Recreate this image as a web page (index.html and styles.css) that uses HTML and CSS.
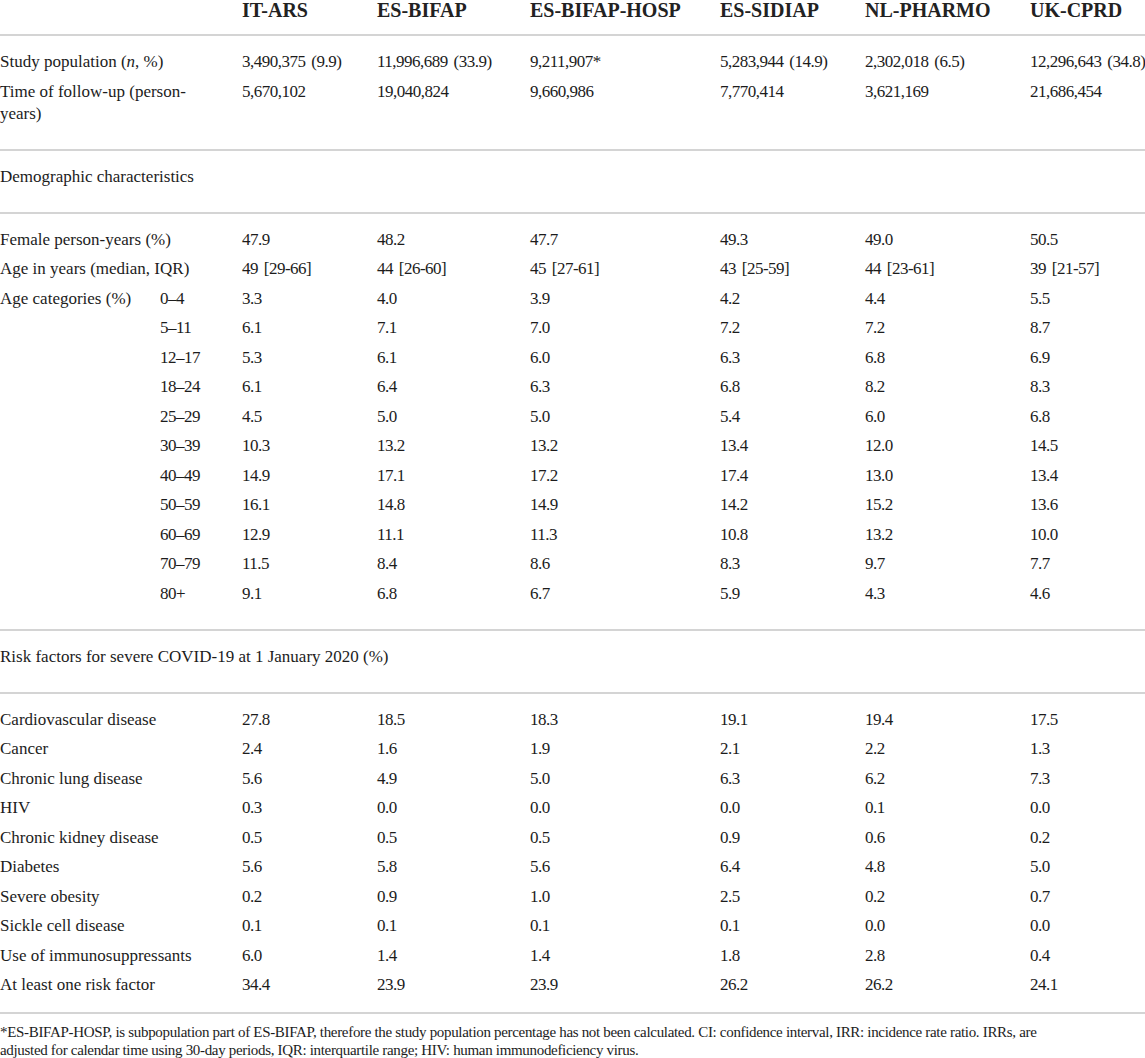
FILE: index.html
```html
<!DOCTYPE html>
<html lang="en">
<head>
<meta charset="utf-8">
<title>Study population characteristics</title>
<link rel="stylesheet" href="styles.css">
</head>
<body>
<table class="data">
  <colgroup>
    <col class="c-label"><col class="c-sub"><col class="c-1"><col class="c-2"><col class="c-3"><col class="c-4"><col class="c-5"><col class="c-6">
  </colgroup>
  <thead>
    <tr>
      <th colspan="2"></th>
      <th>IT-ARS</th>
      <th>ES-BIFAP</th>
      <th>ES-BIFAP-HOSP</th>
      <th>ES-SIDIAP</th>
      <th>NL-PHARMO</th>
      <th>UK-CPRD</th>
    </tr>
  </thead>
  <tbody>
    <tr class="first">
      <td colspan="2" class="label">Study population (<i>n</i>, %)</td>
      <td>3,490,375 (9.9)</td><td>11,996,689 (33.9)</td><td>9,211,907*</td><td>5,283,944 (14.9)</td><td>2,302,018 (6.5)</td><td>12,296,643 (34.8)</td>
    </tr>
    <tr class="last">
      <td colspan="2" class="label">Time of follow-up (person-years)</td>
      <td>5,670,102</td><td>19,040,824</td><td>9,660,986</td><td>7,770,414</td><td>3,621,169</td><td>21,686,454</td>
    </tr>
  </tbody>
  <tbody>
    <tr class="first last">
      <td colspan="8" class="label">Demographic characteristics</td>
    </tr>
  </tbody>
  <tbody>
    <tr class="first">
      <td colspan="2" class="label">Female person-years (%)</td>
      <td>47.9</td><td>48.2</td><td>47.7</td><td>49.3</td><td>49.0</td><td>50.5</td>
    </tr>
    <tr>
      <td colspan="2" class="label">Age in years (median, IQR)</td>
      <td>49 [29-66]</td><td>44 [26-60]</td><td>45 [27-61]</td><td>43 [25-59]</td><td>44 [23-61]</td><td>39 [21-57]</td>
    </tr>
    <tr>
      <td class="label">Age categories (%)</td><td>0–4</td>
      <td>3.3</td><td>4.0</td><td>3.9</td><td>4.2</td><td>4.4</td><td>5.5</td>
    </tr>
    <tr><td></td><td>5–11</td><td>6.1</td><td>7.1</td><td>7.0</td><td>7.2</td><td>7.2</td><td>8.7</td></tr>
    <tr><td></td><td>12–17</td><td>5.3</td><td>6.1</td><td>6.0</td><td>6.3</td><td>6.8</td><td>6.9</td></tr>
    <tr><td></td><td>18–24</td><td>6.1</td><td>6.4</td><td>6.3</td><td>6.8</td><td>8.2</td><td>8.3</td></tr>
    <tr><td></td><td>25–29</td><td>4.5</td><td>5.0</td><td>5.0</td><td>5.4</td><td>6.0</td><td>6.8</td></tr>
    <tr><td></td><td>30–39</td><td>10.3</td><td>13.2</td><td>13.2</td><td>13.4</td><td>12.0</td><td>14.5</td></tr>
    <tr><td></td><td>40–49</td><td>14.9</td><td>17.1</td><td>17.2</td><td>17.4</td><td>13.0</td><td>13.4</td></tr>
    <tr><td></td><td>50–59</td><td>16.1</td><td>14.8</td><td>14.9</td><td>14.2</td><td>15.2</td><td>13.6</td></tr>
    <tr><td></td><td>60–69</td><td>12.9</td><td>11.1</td><td>11.3</td><td>10.8</td><td>13.2</td><td>10.0</td></tr>
    <tr><td></td><td>70–79</td><td>11.5</td><td>8.4</td><td>8.6</td><td>8.3</td><td>9.7</td><td>7.7</td></tr>
    <tr class="last"><td></td><td>80+</td><td>9.1</td><td>6.8</td><td>6.7</td><td>5.9</td><td>4.3</td><td>4.6</td></tr>
  </tbody>
  <tbody>
    <tr class="first last">
      <td colspan="8" class="label">Risk factors for severe COVID-19 at 1 January 2020 (%)</td>
    </tr>
  </tbody>
  <tbody class="final">
    <tr class="first"><td colspan="2" class="label">Cardiovascular disease</td><td>27.8</td><td>18.5</td><td>18.3</td><td>19.1</td><td>19.4</td><td>17.5</td></tr>
    <tr><td colspan="2" class="label">Cancer</td><td>2.4</td><td>1.6</td><td>1.9</td><td>2.1</td><td>2.2</td><td>1.3</td></tr>
    <tr><td colspan="2" class="label">Chronic lung disease</td><td>5.6</td><td>4.9</td><td>5.0</td><td>6.3</td><td>6.2</td><td>7.3</td></tr>
    <tr><td colspan="2" class="label">HIV</td><td>0.3</td><td>0.0</td><td>0.0</td><td>0.0</td><td>0.1</td><td>0.0</td></tr>
    <tr><td colspan="2" class="label">Chronic kidney disease</td><td>0.5</td><td>0.5</td><td>0.5</td><td>0.9</td><td>0.6</td><td>0.2</td></tr>
    <tr><td colspan="2" class="label">Diabetes</td><td>5.6</td><td>5.8</td><td>5.6</td><td>6.4</td><td>4.8</td><td>5.0</td></tr>
    <tr><td colspan="2" class="label">Severe obesity</td><td>0.2</td><td>0.9</td><td>1.0</td><td>2.5</td><td>0.2</td><td>0.7</td></tr>
    <tr><td colspan="2" class="label">Sickle cell disease</td><td>0.1</td><td>0.1</td><td>0.1</td><td>0.1</td><td>0.0</td><td>0.0</td></tr>
    <tr><td colspan="2" class="label">Use of immunosuppressants</td><td>6.0</td><td>1.4</td><td>1.4</td><td>1.8</td><td>2.8</td><td>0.4</td></tr>
    <tr class="last"><td colspan="2" class="label">At least one risk factor</td><td>34.4</td><td>23.9</td><td>23.9</td><td>26.2</td><td>26.2</td><td>24.1</td></tr>
  </tbody>
</table>
<p class="footnote">*ES-BIFAP-HOSP, is subpopulation part of ES-BIFAP, therefore the study population percentage has not been calculated. CI: confidence interval, IRR: incidence rate ratio. IRRs, are adjusted for calendar time using 30-day periods, IQR: interquartile range; HIV: human immunodeficiency virus.</p>
</body>
</html>
```

FILE: styles.css
```css
html, body {
  margin: 0;
  padding: 0;
  background: #ffffff;
}

body {
  font-family: "Liberation Serif", "Times New Roman", serif;
  color: #1c1c1c;
  width: 1145px;
  overflow: hidden;
}

.data {
  width: 1145px;
  table-layout: fixed;
  border-collapse: separate;
  border-spacing: 0;
}

.c-label { width: 160px; }
.c-sub { width: 82px; }
.c-1 { width: 135px; }
.c-2 { width: 153px; }
.c-3 { width: 190px; }
.c-4 { width: 145px; }
.c-5 { width: 165px; }
.c-6 { width: 115px; }

.data th {
  font-size: 20px;
  line-height: 20px;
  font-weight: bold;
  text-align: left;
  padding: 0 0 14px 0;
  white-space: nowrap;
  color: #222;
}

.data td {
  font-size: 17px;
  line-height: 22px;
  padding: 3.75px 0 3.75px 0;
  vertical-align: top;
  text-align: left;
  white-space: nowrap;
  letter-spacing: -0.5px;
  word-spacing: 2px;
}

.data td.label {
  white-space: normal;
  padding-right: 20px;
  letter-spacing: 0;
  word-spacing: 0;
}

.data tr.first > td {
  border-top: 2px solid #d4d4d4;
  padding-top: 15px;
}

.data tr.last > td {
  padding-bottom: 24px;
}

.data tbody.final tr.last > td {
  padding-bottom: 16px;
}

.footnote {
  margin: 0;
  border-top: 2px solid #d4d4d4;
  padding: 9px 70px 0 0;
  font-size: 15px;
  line-height: 18px;
  letter-spacing: -0.32px;
  color: #1c1c1c;
}
```
